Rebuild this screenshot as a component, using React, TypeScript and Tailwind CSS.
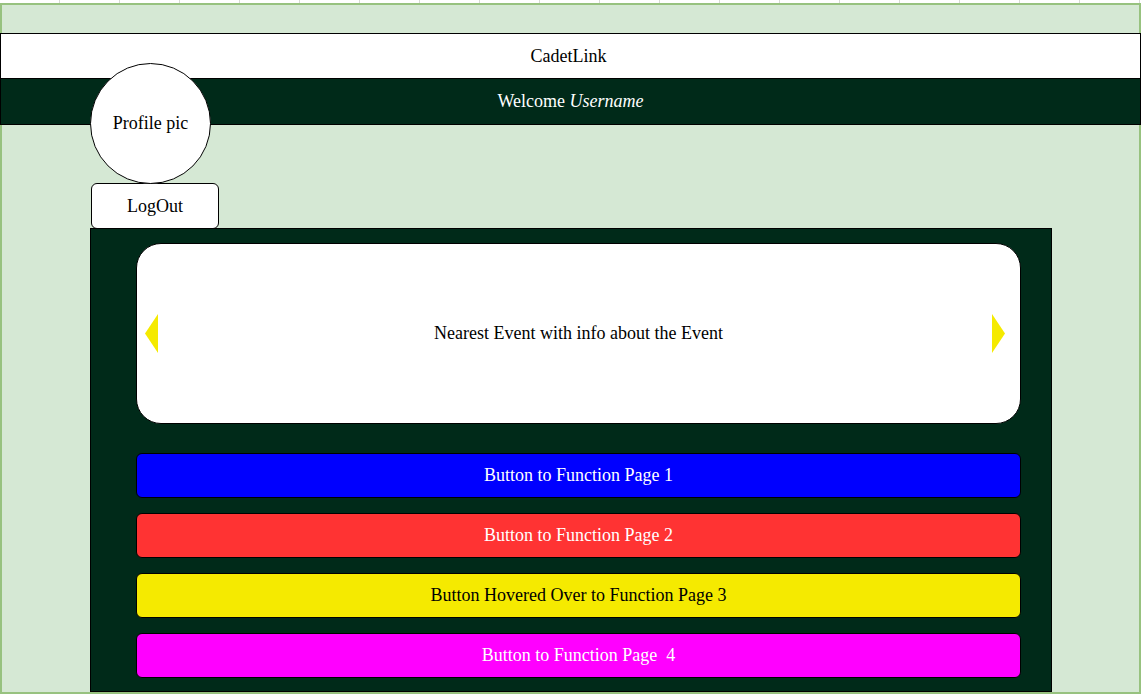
const buttons = [
  { label: 'Button to Function Page 1', cls: 'bg-[#0000ff] text-white' },
  { label: 'Button to Function Page 2', cls: 'bg-[#ff3333] text-white' },
  { label: 'Button Hovered Over to Function Page 3', cls: 'bg-[#f5ea00] text-black' },
  { label: 'Button to Function Page  4', cls: 'bg-[#ff00ff] text-white' },
];

function Arrow({ dir }: { dir: 'left' | 'right' }) {
  return (
    <svg width="13" height="39" viewBox="0 0 13 39" className="shrink-0">
      {dir === 'left' ? (
        <polygon points="13,0 13,39 0,19.5" fill="#f5ea00" />
      ) : (
        <polygon points="0,0 0,39 13,19.5" fill="#f5ea00" />
      )}
    </svg>
  );
}

export default function App() {
  return (
    <div
      className="w-[1141px] h-[694px] overflow-hidden bg-white text-[18px] text-black"
      style={{ fontFamily: '"Liberation Serif", "Times New Roman", serif' }}
    >
      {/* sheet gridlines */}
      <div className="h-[3px] bg-[repeating-linear-gradient(90deg,transparent_0,transparent_59px,#d9d9d9_59px,#d9d9d9_60px)]" />

      <div className="h-[691px] border-2 border-[#97c27f] bg-[#d5e8d4] flex flex-col">
        <div className="mt-[28px] -mx-[2px] h-[46px] bg-white border border-black flex items-center justify-center pr-[4px]">
          CadetLink
        </div>
        <div className="-mx-[2px] h-[46px] bg-[#002a19] border-x border-b border-black flex items-center justify-center text-white">
          Welcome&nbsp;<i>Username</i>
        </div>

        <div className="relative -mt-[62px] ml-[88px] w-[121px] h-[121px] rounded-full bg-white border-[1.5px] border-black flex items-center justify-center">
          Profile pic
        </div>

        <button className="-mt-px ml-[89px] w-[128px] h-[46px] rounded-[6px] bg-white border border-black flex items-center justify-center">
          LogOut
        </button>

        <div className="-mt-px ml-[88px] w-[962px] flex-1 bg-[#002a19] border border-black pl-[45px] pr-[30px] pt-[14px] flex flex-col">
          <div className="h-[181px] rounded-[25px] bg-white border-[1.5px] border-black flex items-center pl-[8px] pr-[15px]">
            <Arrow dir="left" />
            <div className="flex-1 text-center pl-[7px]">Nearest Event with info about the Event</div>
            <Arrow dir="right" />
          </div>

          <div className="mt-[29px] flex flex-col gap-[15px]">
            {buttons.map((b) => (
              <button
                key={b.label}
                className={`h-[45px] rounded-[6px] border-[1.5px] border-black flex items-center justify-center whitespace-pre ${b.cls}`}
              >
                {b.label}
              </button>
            ))}
          </div>
        </div>
      </div>
    </div>
  );
}
